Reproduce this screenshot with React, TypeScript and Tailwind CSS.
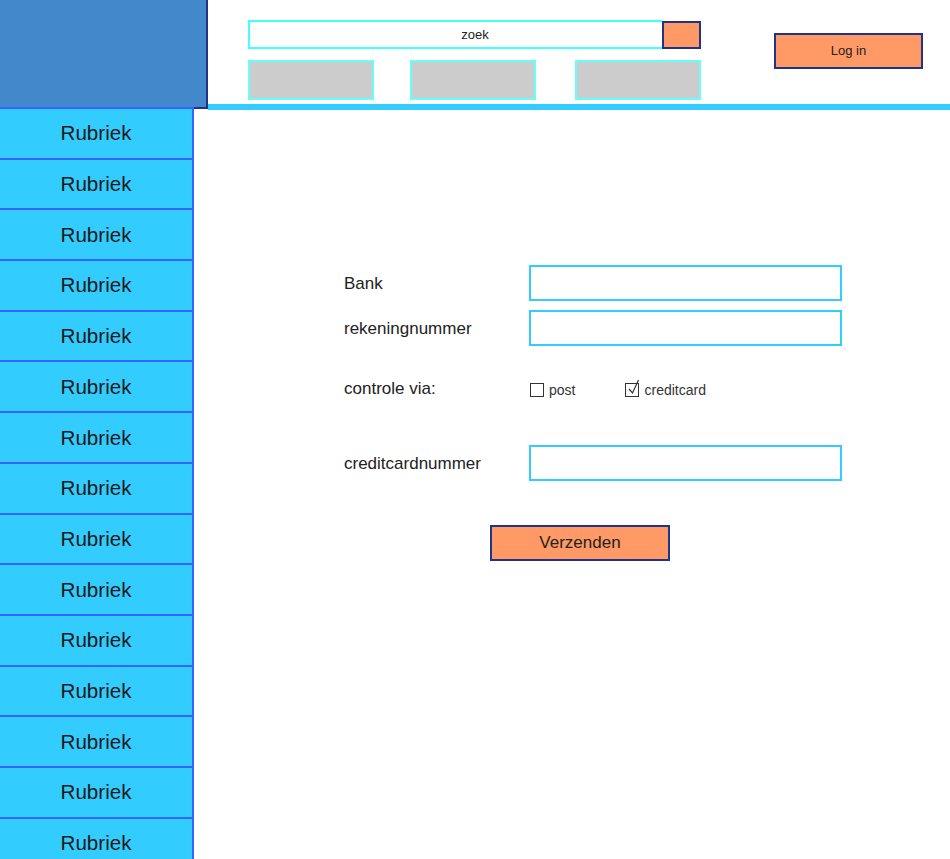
import React from 'react';

const rubrieken = Array.from({ length: 15 }, () => 'Rubriek');

const Checkbox: React.FC<{ checked?: boolean; label: string; className?: string }> = ({ checked, label, className }) => (
  <label className={`flex items-center ${className ?? ''}`}>
    <span className="relative w-[14px] h-[14px] border border-[#333] bg-white">
      {checked && (
        <svg className="absolute -top-[5px] left-[1px]" width="14" height="17" viewBox="0 0 14 17" fill="none">
          <path d="M2 10 L5.5 14 L11.5 1" stroke="#333" strokeWidth="1.2" />
        </svg>
      )}
    </span>
    <span className="ml-[5px] text-[14px] text-[#333]">{label}</span>
  </label>
);

const FormRow: React.FC<{ label: string; className?: string }> = ({ label, className }) => (
  <div className={`flex items-center h-[36px] ${className ?? ''}`}>
    <span className="w-[185px] text-[17px] text-[#222] pt-[1px]">{label}</span>
    <input className="w-[313px] h-[36px] border-2 border-[#33ccff] bg-white outline-none" />
  </div>
);

export default function App() {
  return (
    <div className="w-[950px] h-[859px] overflow-hidden bg-white font-['Liberation_Sans',Arial,sans-serif]">
      {/* header */}
      <div className="flex h-[110px]">
        <div className="w-[208px] h-[109px] bg-[#4488cc] border-r-2 border-b-2 border-[#1f3388]" />
        <div className="flex-1 flex border-b-[6px] border-[#33ccff] h-[110px]">
          <div className="ml-[40px] pt-[20px]">
            <div className="flex h-[29px] w-[453px]">
              <div className="flex-1 border-2 border-r-0 border-[#44ffff] flex items-center justify-center pl-[38px] text-[13px] text-[#222]">
                zoek
              </div>
              <button className="w-[39px] h-[28px] mt-[1px] bg-[#ff9966] border-2 border-[#1f3388]" />
            </div>
            <div className="flex mt-[11px]">
              <div className="w-[126px] h-[40px] bg-[#cccccc] border-2 border-[#66ffff]" />
              <div className="w-[126px] h-[40px] bg-[#cccccc] border-2 border-[#66ffff] ml-[36px]" />
              <div className="w-[126px] h-[40px] bg-[#cccccc] border-2 border-[#66ffff] ml-[39px]" />
            </div>
          </div>
          <div className="ml-[73px] pt-[33px]">
            <button className="w-[149px] h-[36px] bg-[#ff9966] border-2 border-[#1f3388] text-[13px] text-[#222]">
              Log in
            </button>
          </div>
        </div>
      </div>

      {/* body */}
      <div className="flex">
        <nav className="relative w-[194px] -mt-[3px] border-r-2 border-[#3366ff] bg-[#33ccff] border-t-2 shrink-0">
          {rubrieken.map((r, i) => (
            <div
              key={i}
              className="h-[50.7px] border-b-2 border-[#3366ff] flex items-center justify-center text-[20.6px] text-[#1a1a1a] pt-[1px]"
            >
              {r}
            </div>
          ))}
        </nav>

        <main className="flex-1">
          <div className="ml-[150px] mt-[155px] flex flex-col">
            <FormRow label="Bank" />
            <FormRow label="rekeningnummer" className="mt-[9px]" />
            <div className="flex items-center h-[36px] mt-[26px]">
              <span className="w-[186px] text-[17px] text-[#222] -mt-[2px]">controle via:</span>
              <Checkbox label="post" />
              <Checkbox label="creditcard" checked className="ml-[50px]" />
            </div>
            <FormRow label="creditcardnummer" className="mt-[37px]" />
            <button className="ml-[146px] mt-[44px] w-[180px] h-[36px] bg-[#ff9966] border-2 border-[#1f3388] text-[17px] text-[#222]">
              Verzenden
            </button>
          </div>
        </main>
      </div>
    </div>
  );
}
